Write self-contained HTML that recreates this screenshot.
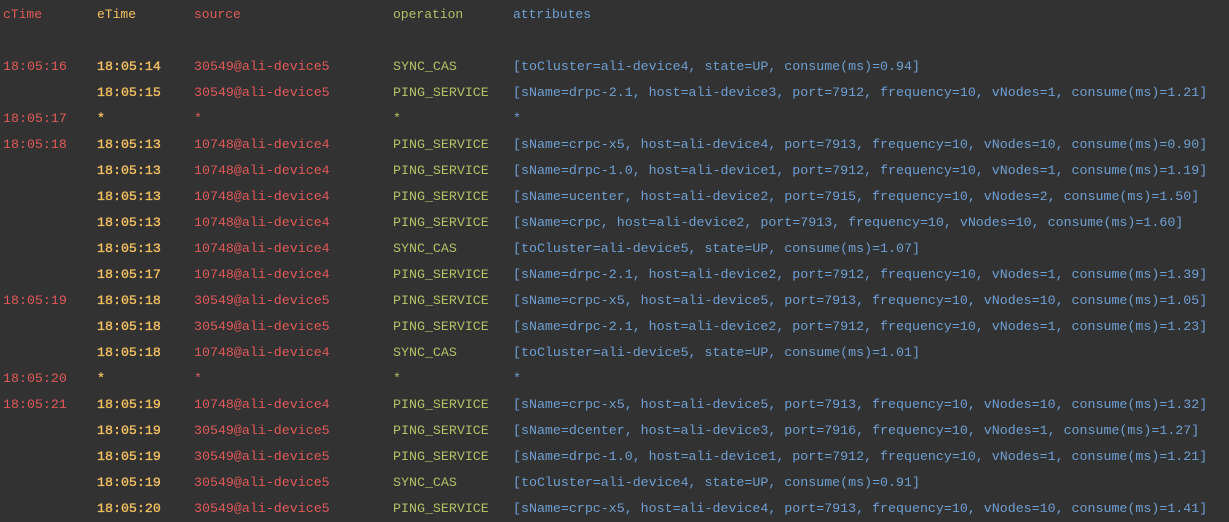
<!DOCTYPE html>
<html><head><style>
body{margin:0;background:#323232;width:1229px;height:522px;overflow:hidden;font-family:"Liberation Mono","DejaVu Sans Mono",monospace;font-size:13.3px;}
.r{position:absolute;left:0;height:26px;line-height:26px;white-space:pre;font-family:"Liberation Mono","DejaVu Sans Mono",monospace;}
.r span{position:absolute;top:0;font-family:"Liberation Mono","DejaVu Sans Mono",monospace;}
.a{left:3px;color:#e0595a}.b{left:97px;color:#f3c062;-webkit-text-stroke:0.35px #f3c062}.c{left:194px;color:#e0595a}.d{left:393px;color:#b0c266}.e{left:513px;color:#6f9fd3}
.h span{font-size:13px;-webkit-text-stroke:0}
</style></head><body>
<div class="r h" style="top:2px"><span class="a">cTime</span><span class="b">eTime</span><span class="c">source</span><span class="d">operation</span><span class="e">attributes</span></div>
<div class="r" style="top:54px"><span class="a">18:05:16</span><span class="b">18:05:14</span><span class="c">30549@ali-device5</span><span class="d">SYNC_CAS</span><span class="e">[toCluster=ali-device4, state=UP, consume(ms)=0.94]</span></div>
<div class="r" style="top:80px"><span class="b">18:05:15</span><span class="c">30549@ali-device5</span><span class="d">PING_SERVICE</span><span class="e">[sName=drpc-2.1, host=ali-device3, port=7912, frequency=10, vNodes=1, consume(ms)=1.21]</span></div>
<div class="r" style="top:106px"><span class="a">18:05:17</span><span class="b">*</span><span class="c">*</span><span class="d">*</span><span class="e">*</span></div>
<div class="r" style="top:132px"><span class="a">18:05:18</span><span class="b">18:05:13</span><span class="c">10748@ali-device4</span><span class="d">PING_SERVICE</span><span class="e">[sName=crpc-x5, host=ali-device4, port=7913, frequency=10, vNodes=10, consume(ms)=0.90]</span></div>
<div class="r" style="top:158px"><span class="b">18:05:13</span><span class="c">10748@ali-device4</span><span class="d">PING_SERVICE</span><span class="e">[sName=drpc-1.0, host=ali-device1, port=7912, frequency=10, vNodes=1, consume(ms)=1.19]</span></div>
<div class="r" style="top:184px"><span class="b">18:05:13</span><span class="c">10748@ali-device4</span><span class="d">PING_SERVICE</span><span class="e">[sName=ucenter, host=ali-device2, port=7915, frequency=10, vNodes=2, consume(ms)=1.50]</span></div>
<div class="r" style="top:210px"><span class="b">18:05:13</span><span class="c">10748@ali-device4</span><span class="d">PING_SERVICE</span><span class="e">[sName=crpc, host=ali-device2, port=7913, frequency=10, vNodes=10, consume(ms)=1.60]</span></div>
<div class="r" style="top:236px"><span class="b">18:05:13</span><span class="c">10748@ali-device4</span><span class="d">SYNC_CAS</span><span class="e">[toCluster=ali-device5, state=UP, consume(ms)=1.07]</span></div>
<div class="r" style="top:262px"><span class="b">18:05:17</span><span class="c">10748@ali-device4</span><span class="d">PING_SERVICE</span><span class="e">[sName=drpc-2.1, host=ali-device2, port=7912, frequency=10, vNodes=1, consume(ms)=1.39]</span></div>
<div class="r" style="top:288px"><span class="a">18:05:19</span><span class="b">18:05:18</span><span class="c">30549@ali-device5</span><span class="d">PING_SERVICE</span><span class="e">[sName=crpc-x5, host=ali-device5, port=7913, frequency=10, vNodes=10, consume(ms)=1.05]</span></div>
<div class="r" style="top:314px"><span class="b">18:05:18</span><span class="c">30549@ali-device5</span><span class="d">PING_SERVICE</span><span class="e">[sName=drpc-2.1, host=ali-device2, port=7912, frequency=10, vNodes=1, consume(ms)=1.23]</span></div>
<div class="r" style="top:340px"><span class="b">18:05:18</span><span class="c">10748@ali-device4</span><span class="d">SYNC_CAS</span><span class="e">[toCluster=ali-device5, state=UP, consume(ms)=1.01]</span></div>
<div class="r" style="top:366px"><span class="a">18:05:20</span><span class="b">*</span><span class="c">*</span><span class="d">*</span><span class="e">*</span></div>
<div class="r" style="top:392px"><span class="a">18:05:21</span><span class="b">18:05:19</span><span class="c">10748@ali-device4</span><span class="d">PING_SERVICE</span><span class="e">[sName=crpc-x5, host=ali-device5, port=7913, frequency=10, vNodes=10, consume(ms)=1.32]</span></div>
<div class="r" style="top:418px"><span class="b">18:05:19</span><span class="c">30549@ali-device5</span><span class="d">PING_SERVICE</span><span class="e">[sName=dcenter, host=ali-device3, port=7916, frequency=10, vNodes=1, consume(ms)=1.27]</span></div>
<div class="r" style="top:444px"><span class="b">18:05:19</span><span class="c">30549@ali-device5</span><span class="d">PING_SERVICE</span><span class="e">[sName=drpc-1.0, host=ali-device1, port=7912, frequency=10, vNodes=1, consume(ms)=1.21]</span></div>
<div class="r" style="top:470px"><span class="b">18:05:19</span><span class="c">30549@ali-device5</span><span class="d">SYNC_CAS</span><span class="e">[toCluster=ali-device4, state=UP, consume(ms)=0.91]</span></div>
<div class="r" style="top:496px"><span class="b">18:05:20</span><span class="c">30549@ali-device5</span><span class="d">PING_SERVICE</span><span class="e">[sName=crpc-x5, host=ali-device4, port=7913, frequency=10, vNodes=10, consume(ms)=1.41]</span></div>
</body></html>
